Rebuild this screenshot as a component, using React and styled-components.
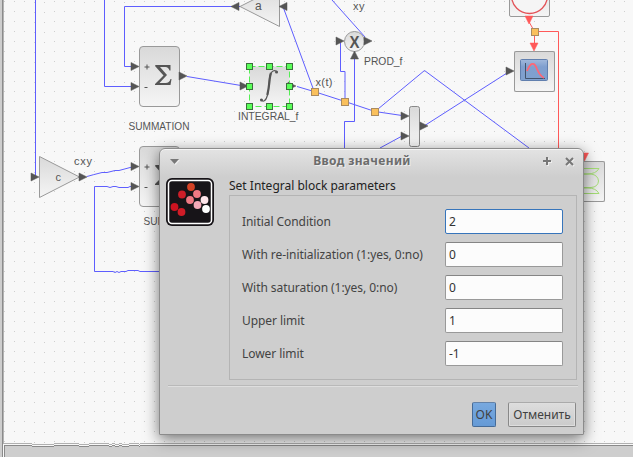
import React from 'react';
import styled, { createGlobalStyle } from 'styled-components';

const Global = createGlobalStyle`
  * { box-sizing: border-box; }
  html, body { margin: 0; overflow: hidden; }
`;

const Page = styled.main`
  position: relative;
  display: grid;
  grid-template: 443px 14px / 4px 629px;
  width: 633px;
  height: 457px;
  overflow: hidden;
  background: #cecece;
  font-family: 'Noto Sans', sans-serif;
`;

const Gutter = styled.div`
  border-right: 1px solid #b4b4b4;
  box-shadow: inset -1px 0 #8b8b8b;
`;

const Canvas = styled.section`
  background: #f8f8f8;
  overflow: hidden;
`;

const Diagram = styled.svg`
  display: block;
  font-family: 'Liberation Sans', sans-serif;
  fill: #555;
`;

const Footer = styled.svg`
  display: block;
  grid-column: 1 / -1;
`;

const Dialog = styled.div`
  position: absolute;
  left: 159px;
  top: 148px;
  width: 425px;
  height: 287px;
  display: flex;
  flex-direction: column;
  border: 1px solid #8b8b8b;
  border-radius: 6px 6px 0 0;
  background: linear-gradient(#e3e3e3 0, #cecece 28px);
  box-shadow: inset 0 1px #f5f5f5, 0 4px 15px rgba(0, 0, 0, 0.55);
`;

const TitleBar = styled.header`
  display: grid;
  grid-template-columns: 29px 1fr 22px 22px 3px;
  align-items: center;
  height: 24px;
`;

const Title = styled.h1`
  margin: 0;
  padding-right: 1px;
  text-align: center;
  font-size: 12px;
  line-height: 24px;
  font-weight: 700;
  letter-spacing: 0.34px;
  color: #6c6c6c;
  text-shadow: 1px 1px #eee;
`;

const TitleIcon = styled.svg`
  display: block;
  justify-self: center;
  filter: drop-shadow(1px 1px 0 #eee);
`;

const Body = styled.div`
  display: grid;
  grid-template-columns: 49px 348px;
  column-gap: 14px;
  padding: 4px 0 0 6px;
  height: 207px;
`;

const Logo = styled.svg`
  display: block;
  margin-top: 1px;
`;

const FormPanel = styled.div`
  display: flex;
  flex-direction: column;
`;

const Heading = styled.div`
  height: 18px;
  line-height: 18px;
  font-size: 12px;
  white-space: nowrap;
  color: #222;
`;

const FieldSet = styled.div`
  display: flex;
  flex-direction: column;
  gap: 7px;
  height: 185px;
  padding: 12px 13px 0 12px;
  border: 1px solid #b4b4b4;
`;

const Field = styled.label`
  display: grid;
  grid-template-columns: 203px 118px;
  align-items: center;
  height: 26px;
  font-size: 12px;
  letter-spacing: -0.06px;
  color: #434343;
  white-space: nowrap;
`;

const Input = styled.input`
  width: 118px;
  height: 25px;
  padding: 1px 0 0 3px;
  border: 1px solid ${(p) => (p.$active ? '#3775bb' : '#999')};
  border-top-color: ${(p) => (p.$active ? '#3775bb' : '#858585')};
  border-radius: 2px;
  outline: none;
  background: #fcfcfc;
  color: #333;
  font: 12px 'Noto Sans', sans-serif;
`;

const Divider = styled.hr`
  width: 410px;
  height: 2px;
  margin: 5px 0 0 8px;
  border: 0;
  border-top: 1px solid #b9b9b9;
  background: #dedede;
`;

const Actions = styled.footer`
  display: flex;
  justify-content: flex-end;
  gap: 12px;
  padding: 15px 7px 0 0;
`;

const Button = styled.button`
  width: ${(p) => (p.$primary ? 24 : 68)}px;
  height: 25px;
  padding: 0;
  border: 1px solid ${(p) => (p.$primary ? '#456b98' : '#888')};
  border-top-color: ${(p) => (p.$primary ? '#6382a8' : '#aaa')};
  border-radius: 2px;
  background: ${(p) => (p.$primary ? 'linear-gradient(#78a9df, #659ad6)' : 'linear-gradient(#ddd, #cbcbcb)')};
  box-shadow: ${(p) => (p.$primary ? 'none' : 'inset 0 0 0 1px #dedede')};
  color: #414141;
  font: 12px 'Noto Sans', sans-serif;
  white-space: nowrap;
`;

const SHIFTED = [34, 44, 84, 124];
const dots = [];
for (let x = 4; x < 633; x += 10) {
  for (let y = 1; y < 443; y += 10) {
    dots.push(`M${x} ${y + (SHIFTED.includes(x) ? 1 : 0)}h1v1h-1z`);
  }
}

const arrowPath = { right: 'M-8-4L0 0L-8 4z', left: 'M8-4L0 0L8 4z', up: 'M-4 8L0 0L4 8z', down: 'M-4-8L0 0L4-8z' };
const Arrow = ({ x, y, dir = 'right', color = '#555' }) => (
  <path d={arrowPath[dir]} transform={`translate(${x} ${y})`} fill={color} stroke={color} strokeOpacity=".5" />
);

const Sum = ({ y }) => (
  <g transform={`translate(139.5 ${y})`}>
    <rect width="40" height="60" rx="3.5" fill="url(#block)" stroke="#999" />
    <path d="M16 18.5H31V24H30Q29 20.500 26 20.500H20.500L27.500 28.500L20 36.500H26Q30 36.500 31 32.500H32L31 38.500H15.500V37.500L24 29L15.500 19.500Z" fill="#555" />
    <path d="M5 20.5h5M7.5 18v5M5 41h3" stroke="#555" fill="none" />
  </g>
);

const Junction = ({ x, y }) => <rect x={x - 3.5} y={y - 3.5} width="7" height="7" fill="#fac05c" stroke="#aa8b61" />;

const handles = [[249, 66], [269, 66], [289, 66], [249, 86], [289, 86], [249, 106], [269, 106], [289, 106]];

function Workspace() {
  return (
    <Diagram width="629" height="443" viewBox="4 0 629 443">
      <defs>
        <linearGradient id="block" x1="0" y1="0" x2="0" y2="1">
          <stop stopColor="#d9d9d9" />
          <stop offset="1" stopColor="#f5f5f5" />
        </linearGradient>
        <linearGradient id="screen" x1="0" y1="0" x2="0" y2="1">
          <stop stopColor="#a2b9dc" />
          <stop offset=".35" stopColor="#809fcf" />
          <stop offset="1" stopColor="#7fa0cf" />
        </linearGradient>
      </defs>
      <path d={dots.join('')} fill="#cfcfcf" shapeRendering="crispEdges" />

      <Sum y={46.5} />
      <Sum y={146.5} />
      <path d="M240 6.5L279.5-13.5V26.5Z" fill="url(#block)" stroke="#999" />
      <path d="M39.5 156.5L79.5 177L39.5 197.5Z" fill="url(#block)" stroke="#999" />
      <rect x="249.5" y="66.5" width="40" height="40" fill="url(#block)" />
      <circle cx="354.5" cy="41.5" r="10" fill="url(#block)" stroke="#999" />
      <rect x="409.5" y="106.5" width="10" height="40" rx="2" fill="url(#block)" stroke="#888" />
      <rect x="514.5" y="51.5" width="40" height="40" rx="1.5" fill="url(#block)" stroke="#999" />
      <rect x="509.5" y="-23.5" width="40" height="40" rx="1.5" fill="url(#block)" stroke="#999" />
      <circle cx="529.5" cy="-4.5" r="18" fill="#f5f5f5" stroke="#e35358" strokeWidth="1.3" />
      <rect x="564.5" y="161.5" width="40" height="40" rx="1.5" fill="url(#block)" stroke="#999" />
      <path d="M584 168.5H599Q596 174 587 174H580M584 174H591Q598 175 598.5 181Q598 187 591 187.5H582M582 188H588Q596 188 599 193.5H580" fill="none" stroke="#a5de75" />

      <g fill="none" stroke="#5e5eff" strokeWidth="1">
        <path d="M35.5 0V177M104.5 0V86.5H132M240 6.5H124.5V66.5H132" />
        <path d="M187 76.5L241 85.5M297 86.5L314 91.5L345 101.5L375 111.5L402 115.5M283.5 8L314 91" />
        <path d="M332 0L365 37M345 101V71.5H340.5V42M344.5 148V121.5H354.5V57" />
        <path d="M375 111.5L424.5 70.5L529 148M424 126L507 73M380 148L403 135.5" />
        <path d="M87 176.5Q92 175 102 172.5H107L115 170.5H119L132 167M159 271.5H140L138 270.5H128L126 271.5H121L119 272.5L117 271.5L115 272.5L113 271.5H94.5V186.5H107L110 187.5L113 186.5H116L119 187.5H128L130 186.5H132" />
      </g>
      <path d="M528 20L534.5 31.5V47M534 31.5H558.5V148" stroke="#ff5959" fill="none" />

      <Arrow x={139} y={66.5} /><Arrow x={139} y={86.5} />
      <Arrow x={187} y={76} /><Arrow x={248} y={86} /><Arrow x={296} y={86} />
      <Arrow x={231} y={6.5} dir="left" /><Arrow x={279} y={6.5} dir="left" />
      <Arrow x={344} y={41} /><Arrow x={372} y={41} /><Arrow x={354.5} y={51} dir="up" />
      <Arrow x={409} y={116} /><Arrow x={409} y={136} /><Arrow x={428} y={126} />
      <Arrow x={514} y={71} />
      <Arrow x={39} y={177} /><Arrow x={87} y={177} /><Arrow x={139} y={166.5} /><Arrow x={139} y={186.5} />
      <Arrow x={529} y={24} dir="down" color="#ff5959" /><Arrow x={534} y={51} dir="down" color="#ff5959" />
      <Arrow x={584.5} y={161} dir="down" color="#ff5959" />

      <path d="M260.500 99C263 103 266 101 267.5 95C270 84 268 73 273 71C275 70 277.500 71 277 73" fill="none" stroke="#555" strokeWidth="1.1" />
      <path d="M267.300 95C270 84 269 78 271 73" fill="none" stroke="#555" strokeWidth="2.2" />
      <circle cx="261.5" cy="100" r="1.5" /><circle cx="276.5" cy="72" r="1.5" />
      <rect x="249.5" y="66.5" width="40" height="40" fill="none" stroke="#55ed55" strokeDasharray="6 3" />
      {handles.map(([x, y]) => (
        <rect key={`${x}-${y}`} x={x - 2.5} y={y - 2.5} width="6" height="6" fill="#5aff5a" stroke="#3c703c" />
      ))}
      <Junction x={315} y={92} /><Junction x={345} y={102} /><Junction x={375} y={112} /><Junction x={535} y={32} />

      <rect x="520.5" y="59.5" width="27" height="21" rx="1" fill="url(#screen)" stroke="#617fae" />
      <path d="M525.5 63V78.5H545" fill="none" stroke="#43536c" />
      <path d="M527 71Q530 64 532 64Q535 63 537 69Q540 76 544 78" fill="none" stroke="#ff6675" strokeWidth="1.8" />

      <g fontSize="11">
        <text x="255" y="10" fontSize="12">a</text>
        <text x="55.5" y="181">c</text>
        <text x="74" y="165" textLength="18">cxy</text>
        <text x="353" y="10" textLength="11.5">xy</text>
        <text x="315.5" y="85.5" textLength="17">x(t)</text>
        <text x="128.5" y="130" textLength="61" lengthAdjust="spacingAndGlyphs">SUMMATION</text>
        <text x="143.5" y="225" textLength="61" lengthAdjust="spacingAndGlyphs">SUMMATION</text>
        <text x="238" y="120" textLength="60.5" lengthAdjust="spacingAndGlyphs">INTEGRAL_f</text>
        <text x="364" y="65" textLength="38.5" lengthAdjust="spacingAndGlyphs">PROD_f</text>
        <text x="303" y="155">xy</text>
        <text x="349.5" y="47.5" fontSize="17" fontWeight="bold" textLength="10" lengthAdjust="spacingAndGlyphs">X</text>
      </g>
    </Diagram>
  );
}

const beads = [[25, 9, '#d34225'], [16, 16.5, '#cf1d28'], [31, 16, '#ef7984'], [24, 22, '#ef7984'], [38.5, 22, '#ffe5eb'], [31.5, 27, '#f5a9b8'], [8.5, 29, '#cc1320'], [15.5, 34, '#d01c27'], [40, 31, '#fff']];
const rows = [['Initial Condition', '2'], ['With re-initialization (1:yes, 0:no)', '0'], ['With saturation (1:yes, 0:no)', '0'], ['Upper limit', '1'], ['Lower limit', '-1']];

export default function App() {
  return (
    <Page>
      <Global />
      <Gutter />
      <Canvas><Workspace /></Canvas>
      <Footer width="633" height="14" shapeRendering="crispEdges">
        <rect x="3" width="630" height="2" fill="#f8f8f8" />
        <path d="M3 .5H32M54 .5H79M89 .5H109M112 .5H115M119 .5H122M129 .5H139M140 .5H633M32 1.5H54M79 1.5H89M109 1.5H112M115 1.5H119M122 1.5H129M139 1.5H140" stroke="#b0b0b0" />
        <path d="M4 2.5H32M54 2.5H79M89 2.5H109M112 2.5H115M119 2.5H122M129 2.5H139M140 2.5H633M32 3.5H54M79 3.5H89M109 3.5H112M115 3.5H119M122 3.5H129M139 3.5H140M4.5 3V14M2.5 0V14" stroke="#8a8a8a" />
        <path d="M3.5 1V14M32 2.5H54M79 2.5H89M109 2.5H112M115 2.5H119M122 2.5H129M139 2.5H140" stroke="#f8f8f8" />
      </Footer>
      <Dialog role="dialog">
        <TitleBar>
          <TitleIcon width="9" height="6"><path d="M0 1H9L4.5 6Z" fill="#777" /></TitleIcon>
          <Title>Ввод значений</Title>
          <TitleIcon width="8" height="8"><path d="M4 0V8M0 4H8" stroke="#777" strokeWidth="2" /></TitleIcon>
          <TitleIcon width="9" height="9"><path d="M1 1L8 8M8 1L1 8" stroke="#777" strokeWidth="2" /></TitleIcon>
        </TitleBar>
        <Body>
          <Logo width="49" height="49">
            <rect width="48" height="48" rx="6" fill="#171418" />
            <rect x="2.5" y="2.5" width="43" height="43" rx="3.5" fill="#171418" stroke="#fff" strokeWidth="1.5" />
            {beads.map(([x, y, c]) => <circle key={`${x}-${y}`} cx={x} cy={y} r="3.9" fill={c} />)}
          </Logo>
          <FormPanel>
            <Heading>Set Integral block parameters</Heading>
            <FieldSet>
              {rows.map(([label, value], i) => (
                <Field key={label}>{label}<Input defaultValue={value} $active={i === 0} /></Field>
              ))}
            </FieldSet>
          </FormPanel>
        </Body>
        <Divider />
        <Actions>
          <Button $primary>OK</Button>
          <Button>Отменить</Button>
        </Actions>
      </Dialog>
    </Page>
  );
}
